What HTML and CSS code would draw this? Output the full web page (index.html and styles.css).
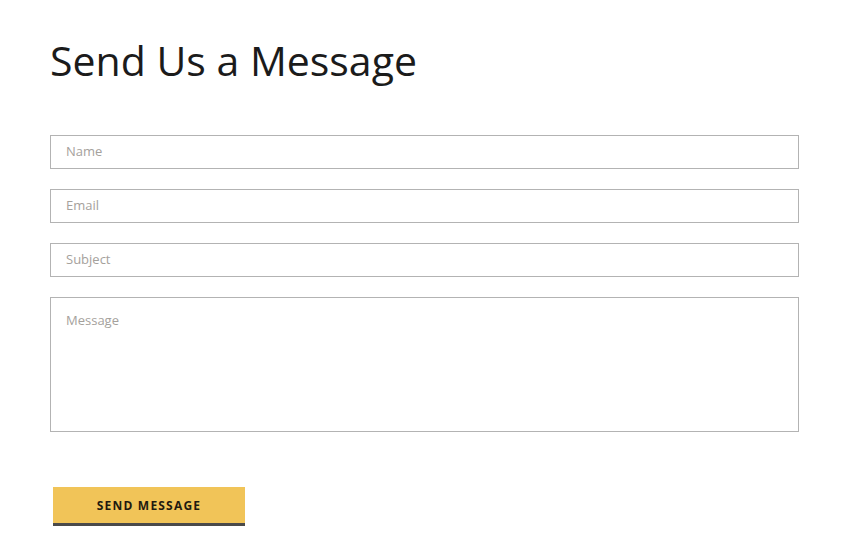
FILE: index.html
```html
<!DOCTYPE html>
<html lang="en">
<head>
<meta charset="utf-8">
<title>Send Us a Message</title>
<link rel="stylesheet" href="styles.css">
</head>
<body>
<main class="contact">
  <h1 class="contact-title">Send Us a Message</h1>
  <form class="contact-form">
    <input class="field" type="text" placeholder="Name">
    <input class="field" type="email" placeholder="Email">
    <input class="field" type="text" placeholder="Subject">
    <textarea class="field field-message" placeholder="Message"></textarea>
    <div class="actions">
      <button class="send-btn" type="button">SEND MESSAGE</button>
    </div>
  </form>
</main>
</body>
</html>
```
FILE: styles.css
```css
html, body {
  margin: 0;
  padding: 0;
  background: #ffffff;
}
body {
  font-family: "Open Sans", "Noto Sans", sans-serif;
  color: #1a1a1a;
}
.contact {
  width: 749px;
  padding: 32px 0 0 50px;
}
.contact-title {
  margin: 0 0 47px 0;
  font-family: "Open Sans", sans-serif;
  font-weight: 400;
  font-size: 41px;
  line-height: 56px;
  color: #1b1b1b;
  letter-spacing: 0;
}
.contact-form {
  display: flex;
  flex-direction: column;
  gap: 20px;
}
.field {
  box-sizing: border-box;
  width: 749px;
  height: 34px;
  margin: 0;
  padding: 0 15px 3px;
  border: 1px solid #b3b3b3;
  border-radius: 0;
  background: #fff;
  font-family: "Open Sans", sans-serif;
  font-size: 13px;
  color: #333;
  outline: none;
}
.field::placeholder {
  color: #a5a19c;
}
.field-message {
  height: 135px;
  padding: 13px 15px;
  resize: none;
  display: block;
}
.actions {
  padding: 35px 0 0 3px;
}
.send-btn {
  box-sizing: border-box;
  width: 192px;
  height: 39px;
  border: 0;
  border-bottom: 3px solid #4a4a4a;
  background: #f1c458;
  font-family: "Open Sans", sans-serif;
  font-weight: 700;
  font-size: 12px;
  letter-spacing: 1.2px;
  color: #1f1a10;
  padding: 0;
  cursor: pointer;
}
```
